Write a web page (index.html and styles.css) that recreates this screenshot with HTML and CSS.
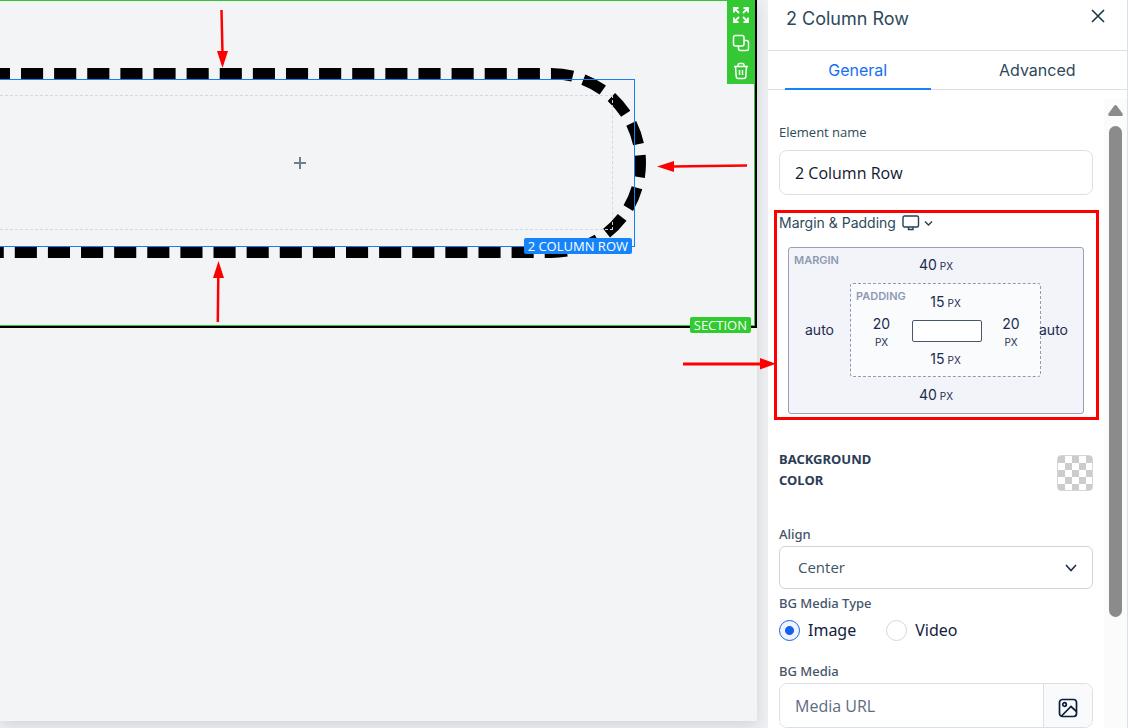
FILE: index.html
```html
<!DOCTYPE html>
<html lang="en">
<head>
<meta charset="utf-8">
<title>Page builder</title>
<link rel="stylesheet" href="styles.css">
</head>
<body>
<div class="app">
  <main class="canvas">
    <div class="sheet">
      <section class="section">
        <div class="row">
          <svg class="row-dashes" width="660" height="192" viewBox="-13 67 660 192" fill="none" stroke="#000" stroke-width="11" aria-hidden="true"><path d="M-12.1 73.5H551A89.5 89.5 0 0 1 551 252.5H-20" stroke-dasharray="22.1 11.02"/></svg>
          <div class="column">
            <button class="add" aria-label="Add element"><svg width="12" height="12" viewBox="0 0 12 12" stroke="#6b7f8c" stroke-width="2"><path d="M6 0v12M0 6h12"/></svg></button>
          </div>
          <span class="tag tag-row">2 COLUMN ROW</span>
        </div>
        <div class="tools">
          <button aria-label="Move"><svg width="16" height="16" viewBox="0 0 16 16" fill="none" stroke="#fff" stroke-width="1.8"><path d="M1 5.500V1h4.500M1 1l5 5M10.500 1H15v4.500M15 1l-5 5M1 10.500V15h4.500M1 15l5-5M10.500 15H15v-4.500M15 15l-5-5"/></svg></button>
          <button aria-label="Duplicate"><svg width="18" height="18" viewBox="0 0 18 18" fill="none" stroke="#fff" stroke-width="1.5"><rect x="1.5" y="1.5" width="10.500" height="10.500" rx="2"/><path d="M12 6.500h2.500a2 2 0 0 1 2 2v6a2 2 0 0 1-2 2h-6a2 2 0 0 1-2-2V12"/></svg></button>
          <button aria-label="Delete"><svg width="16" height="18" viewBox="0 0 16 18" fill="none" stroke="#fff" stroke-width="1.5"><path d="M1 4.500h14M5 4.500V3a1.500 1.500 0 0 1 1.500-1.500h3A1.500 1.500 0 0 1 11 3v1.500M2.500 4.500l.7 10a2 2 0 0 0 2 2h5.600a2 2 0 0 0 2-2l.7-10M6.500 8v5M9.500 8v5"/></svg></button>
        </div>
        <span class="tag tag-section">SECTION</span>
        <svg class="arrows" width="557" height="322" viewBox="200 0 557 322" fill="#f00" stroke="#f00" aria-hidden="true">
          <path d="M221.500 10L222.500 54" stroke-width="2.500"/><path d="M217 51h11l-5.500 17z" stroke="none"/>
          <path d="M217.800 322L218.300 276" stroke-width="2.500"/><path d="M218.500 261l-5.500 17h11z" stroke="none"/>
          <path d="M747 165.500L672 166.400" stroke-width="2.500"/><path d="M657 166.500l17-5.500v11z" stroke="none"/>
        </svg>
      </section>
    </div>
    <svg class="arrow-panel" width="93" height="12" viewBox="0 0 93 12" fill="#f00" aria-hidden="true"><path d="M0 4.500h77V0l16 5.800L77 11.500V7.500H0z"/></svg>
  </main>

  <aside class="panel">
    <header class="panel-head">
      <h1>2 Column Row</h1>
      <button aria-label="Close"><svg width="14" height="14" viewBox="0 0 14 14" stroke="#17364a" stroke-width="1.6"><path d="M1 1l12 12M13 1L1 13"/></svg></button>
    </header>
    <nav class="tabs">
      <button class="active"><span>General</span></button>
      <button><span>Advanced</span></button>
    </nav>
    <div class="panel-body">
      <form class="form">
        <label class="label-name" for="name">Element name</label>
        <input class="text-input" id="name" type="text" value="2 Column Row">

        <div class="spacing">
          <div class="spacing-head">
            <span>Margin &amp; Padding</span>
            <button type="button" aria-label="Device"><svg width="32" height="16" viewBox="0 0 32 16" fill="none" stroke="#234353" stroke-width="1.4"><rect x="1" y="1" width="15.500" height="11" rx="1.500"/><path d="M6.500 12v2.500h4.500V12M23 6.500l3.500 3.500 3.500-3.500"/></svg></button>
          </div>
          <div class="margin-box">
            <span class="corner">MARGIN</span>
            <button type="button" class="top">40<small>PX</small></button>
            <button type="button">auto</button>
            <div class="padding-box">
              <span class="corner">PADDING</span>
              <button type="button" class="top">15<small>PX</small></button>
              <button type="button" class="side">20<small>PX</small></button>
              <div class="content-box"></div>
              <button type="button" class="side">20<small>PX</small></button>
              <button type="button" class="bottom">15<small>PX</small></button>
            </div>
            <button type="button" class="over">auto</button>
            <button type="button" class="bottom">40<small>PX</small></button>
          </div>
        </div>

        <div class="color-row">
          <h2>BACKGROUND<br>COLOR</h2>
          <button type="button" class="swatch" aria-label="Background color"></button>
        </div>

        <label class="label" for="align">Align</label>
        <div class="select-wrap">
          <select id="align"><option>Center</option></select>
          <svg width="12" height="8" viewBox="0 0 12 8" fill="none" stroke="#1c3048" stroke-width="1.600"><path d="M1 1l5 5.500L11 1"/></svg>
        </div>

        <fieldset class="radios">
          <legend class="label">BG Media Type</legend>
          <label><input type="radio" name="media" checked>Image</label>
          <label><input type="radio" name="media">Video</label>
        </fieldset>

        <label class="label" for="url">BG Media</label>
        <div class="url-group">
          <input id="url" type="text" placeholder="Media URL">
          <button type="button" aria-label="Choose image"><svg width="20" height="20" viewBox="0 0 20 20" fill="none" stroke="#0b1f3a" stroke-width="1.700"><rect x="1.500" y="1.500" width="17" height="17" rx="3"/><circle cx="6.500" cy="6.500" r="1.800"/><path d="M3.500 18l9.500-9.500 5.500 5"/></svg></button>
        </div>
      </form>
      <div class="scrollbar" aria-hidden="true">
        <svg width="15" height="11" viewBox="0 0 15 11" fill="#8b8b8b"><path d="M6 1Q7.500-.8 9 1l5.500 7.500Q15.300 11 13.500 11h-12Q-.3 11 .5 8.500z"/></svg>
        <div class="thumb"></div>
      </div>
    </div>
  </aside>
</div>
</body>
</html>
```
FILE: styles.css
```css
* { box-sizing: border-box; }

body {
  margin: 0;
  overflow: hidden;
  font-family: "Open Sans", "Noto Sans", sans-serif;
  color: #2d4a5a;
}

button {
  padding: 0;
  border: 0;
  background: none;
  font: inherit;
  color: inherit;
}

svg { display: block; }

.app {
  display: grid;
  grid-template-columns: 1fr 360px;
  height: 100vh;
}

/* Canvas */
.canvas {
  position: relative;
  padding: 0 11px 7px 0;
  background: #eff0f3;
}

.sheet {
  height: 100%;
  background: #f3f4f6;
  box-shadow: 0 4px 14px rgba(0, 0, 0, 0.12);
  clip-path: inset(0 -11px -7px 0);
}

.section {
  position: relative;
  isolation: isolate;
  padding: 78px 119px 79px 0;
  border: solid #000;
  border-width: 0 2px 2px 0;
}

.section::before {
  content: "";
  position: absolute;
  inset: 0;
  border: solid #35c435;
  border-width: 1px 1px 1px 0;
}

.row {
  position: relative;
  margin: 1px 1px 0 0;
  padding: 15px 21px 16px 0;
  border: solid #1580f5;
  border-width: 1px 1px 1px 0;
}

.row-dashes {
  position: absolute;
  top: -13px;
  right: -13px;
  z-index: -1;
}

.column {
  display: grid;
  height: 135px;
  border: dashed #d3d8e6;
  border-width: 1px 1px 1px 0;
  padding-right: 13px;
}

.add {
  place-self: center;
}

.tag {
  position: absolute;
  padding: 0 4px;
  border-radius: 2px;
  font-size: 13px;
  line-height: 16px;
  color: #fff;
}

.tag-row {
  right: 2px;
  bottom: -8px;
  background: #1684f8;
}

.tag-section {
  right: 4px;
  bottom: -7px;
  background: #2fcb2f;
}

.tools {
  position: absolute;
  top: 0;
  right: 0;
  display: grid;
  grid-auto-rows: 28px;
  width: 28px;
  padding-top: 1px;
  height: 84px;
  background: #34c934;
}

.tools button {
  display: grid;
  place-items: center;
}

.arrows {
  position: absolute;
  top: 0;
  right: -2px;
}

.arrow-panel {
  position: absolute;
  top: 358px;
  right: -8px;
}

/* Settings panel */
.panel {
  display: flex;
  flex-direction: column;
  min-height: 0;
  border-right: 1px solid #dcdfe6;
  background: #fff;
}

.panel-head {
  display: flex;
  justify-content: space-between;
  align-items: flex-start;
  height: 51px;
  padding: 7px 22px 0 18px;
  border-bottom: 1px solid #dcdfe6;
}

.panel-head h1 {
  margin: 0;
  font: 400 18px/24px Inter, sans-serif;
}

.panel-head button { padding-top: 2px; }

.tabs {
  display: flex;
  height: 39px;
  border-bottom: 1px solid #dcdfe6;
  font: 16px/39px Inter, sans-serif;
}

.tabs button {
  flex: 1;
  padding: 0 17px;
}

.tabs span {
  display: block;
  height: 39px;
}

.tabs .active { color: #1570ef; }
.tabs .active span { border-bottom: 2px solid #1684f8; }

.panel-body {
  display: flex;
  flex: 1;
  min-height: 0;
  overflow: hidden;
}

.form {
  flex: 1;
  padding: 33px 11px 0;
}

.form > label { display: block; }

.label-name {
  font-size: 13px;
  line-height: 18px;
}

.text-input {
  display: block;
  width: 100%;
  height: 45px;
  margin-top: 9px;
  padding: 0 15px;
  border: 1px solid #dcdfe6;
  border-radius: 8px;
  font: 16px "Open Sans", sans-serif;
  color: #10182f;
}

.spacing {
  margin: 15px -6px 0 -5px;
  padding: 0 12px 3px 2px;
  border: 3px solid #f00;
}

.spacing-head {
  display: flex;
  gap: 6px;
  align-items: center;
  height: 20px;
  font: 14px/20px Inter, sans-serif;
}

.margin-box,
.padding-box {
  position: relative;
  display: grid;
  font: 14px/18px Inter, sans-serif;
  color: #1d2b4f;
}

.margin-box {
  grid-template: 35px 94px 36px / 61px 1fr 42px;
  margin: 14px 0 0 9px;
  border: 1px solid #97a2b8;
  border-radius: 3px;
  background: #f2f4f9;
}

.padding-box {
  grid-template: 36px 22px 34px / 61px 1fr 58px;
  border: 1px dashed #8f9bb3;
  border-radius: 3px;
  background: #f9fbfd;
}

.top,
.bottom { grid-column: 1 / -1; }

.margin-box small {
  margin-left: 3px;
  font-size: 10px;
}

.margin-box .side small {
  display: block;
  margin-left: 0;
}

.side {
  align-self: center;
  padding-top: 3px;
}

.over { justify-self: start; margin-left: -2px; z-index: 1; }

.corner {
  position: absolute;
  top: 4px;
  left: 5px;
  font: 600 11px/16px Inter, sans-serif;
  color: #8e9ab3;
}

.content-box {
  border: 1px solid #46566f;
  border-radius: 2px;
  background: #fff;
}

.color-row {
  display: flex;
  justify-content: space-between;
  align-items: center;
  margin: 28px 0 34px;
}

.color-row h2 {
  margin: 0;
  font: 700 13px/21px "Noto Sans", sans-serif;
  color: #2b3c55;
}

.swatch {
  width: 36px;
  height: 36px;
  margin-top: 7px;
  border: 1px solid #d3d6dd;
  border-radius: 4px;
  background: repeating-conic-gradient(#fff 0 25%, #ccc 0 50%) 0 0 / 14px 14px;
}

.label {
  padding: 0;
  font: 500 13px/18px "Noto Sans", sans-serif;
  color: #44546a;
}

.select-wrap {
  display: grid;
  align-items: center;
  margin: 3px 0 5px;
}

.select-wrap > * { grid-area: 1 / 1; }

.select-wrap svg {
  justify-self: end;
  margin-right: 16px;
  pointer-events: none;
}

select {
  appearance: none;
  width: 100%;
  height: 43px;
  padding: 0 18px 2px;
  border: 1px solid #cfd4de;
  border-radius: 6px;
  background: #fff;
  font: 15px "Open Sans", sans-serif;
  color: #3d5566;
}

.radios {
  display: flex;
  gap: 30px;
  margin: 0 0 20px;
  padding: 6px 0 0;
  border: 0;
  color: #14213d;
}

.radios label {
  display: flex;
  gap: 8px;
  align-items: center;
  font: 16px/24px "Noto Sans", sans-serif;
}

.radios input {
  appearance: none;
  width: 21px;
  height: 21px;
  margin: 0;
  border: 1px solid #d3d6dd;
  border-radius: 50%;
}

.radios input:checked {
  border-color: #155eef;
  background: radial-gradient(circle, #155eef 4px, #eff5ff 5px);
}

.url-group {
  display: flex;
  height: 45px;
  margin-top: 3px;
  overflow: hidden;
  border: 1px solid #dcdfe6;
  border-radius: 8px;
}

.url-group input {
  flex: 1;
  min-width: 0;
  padding: 0 15px;
  border: 0;
  font: 16px "Open Sans", sans-serif;
}

.url-group input::placeholder { color: #5d6b82; }

.url-group button {
  display: grid;
  place-items: center;
  width: 49px;
  padding-top: 5px;
  border-left: 1px solid #dcdfe6;
  background: #f9fafc;
}

.scrollbar {
  width: 23px;
  margin-top: 9px;
  padding: 6px 4px 0;
  background: #fbfbfb;
}

.thumb {
  width: 13px;
  height: 491px;
  margin: 10px 1px 0;
  border-radius: 7px;
  background: #8b8b8b;
}
```
